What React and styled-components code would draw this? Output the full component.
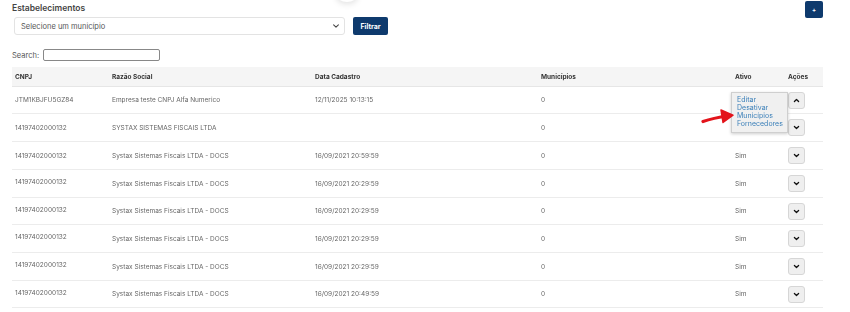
import React from "react";
import styled, { createGlobalStyle } from "styled-components";

const GlobalStyle = createGlobalStyle`
  body {
    margin: 0;
    background: #fff;
    font-family: Inter, "Liberation Sans", sans-serif;
    color: #555;
    -webkit-font-smoothing: antialiased;
  }
`;

const Page = styled.div`
  position: relative;
  width: 811px;
  padding: 1px 0 0 12px;
`;

const TopShadow = styled.div`
  position: absolute;
  left: 336px;
  top: -14px;
  width: 22px;
  height: 16px;
  border-radius: 50%;
  box-shadow: 0 2px 6px rgba(0, 0, 0, 0.12);
`;

const TitleBar = styled.div`
  display: flex;
  justify-content: space-between;
  align-items: flex-start;
  height: 16px;
`;

const Title = styled.h1`
  margin: 2px 0 0;
  font-size: 8.5px;
  font-weight: 600;
  color: #444;
`;

const NavyButton = styled.button`
  background: #0e3a6d;
  color: #fff;
  border: none;
  border-radius: 2px;
  font-family: inherit;
  font-weight: 700;
  padding: 0;
  display: flex;
  align-items: center;
  justify-content: center;
  cursor: pointer;
`;

const AddButton = styled(NavyButton)`
  width: 18px;
  height: 17px;
  font-size: 6px;
`;

const FilterRow = styled.div`
  display: flex;
  gap: 8px;
  margin: 0 0 0 2px;
`;

const Select = styled.div`
  width: 319px;
  height: 16px;
  border: 1px solid #e3e3e3;
  border-radius: 3px;
  display: flex;
  align-items: center;
  justify-content: space-between;
  padding: 0 4px 0 6px;
  font-size: 7.5px;
  color: #555;
  box-sizing: content-box;
`;

const FilterButton = styled(NavyButton)`
  width: 35px;
  height: 18px;
  font-size: 7px;
`;

const SearchRow = styled.div`
  display: flex;
  align-items: center;
  gap: 4px;
  margin-top: 14px;
  font-size: 7.5px;
  color: #555;
`;

const SearchInput = styled.div`
  width: 115px;
  height: 10px;
  border: 1px solid #888;
  border-radius: 2px;
`;

const Table = styled.div`
  margin-top: 6px;
  width: 811px;
  will-change: transform;
`;

const cols = "97px 203px 226px 194px 53px 38px";

const HeadRow = styled.div`
  display: grid;
  grid-template-columns: ${cols};
  height: 20px;
  align-items: center;
  background: #f5f5f5;
  border-bottom: 1px solid #e6e6e6;
  box-sizing: border-box;
`;

const HeadCell = styled.div`
  padding-left: 3px;
  font-size: 6.5px;
  font-weight: 700;
  color: #333;
`;

const Row = styled.div`
  display: grid;
  grid-template-columns: ${cols};
  height: ${(p) => (p.$short ? 27 : 28)}px;
  align-items: center;
  border-bottom: 1px solid #ececec;
  box-sizing: border-box;
`;

const Cell = styled.div`
  position: relative;
  padding-left: 3px;
  font-size: 6.5px;
  color: #666;
  white-space: nowrap;
  margin-top: ${(p) => (p.$raise ? "-3px" : "0")};
`;

const ToggleButton = styled.div`
  width: 15px;
  height: 15px;
  background: #efefef;
  border: 1px solid #d6d6d6;
  border-radius: 3px;
  display: flex;
  align-items: center;
  justify-content: center;
`;

const Menu = styled.div`
  position: absolute;
  right: 35px;
  top: 0;
  width: 50px;
  padding: 3px 0 4px 5px;
  background: #f0f0f0;
  border: 1px solid #cfcfcf;
  box-shadow: 0 1px 3px rgba(0, 0, 0, 0.2);
  display: flex;
  flex-direction: column;
  z-index: 2;
`;

const MenuItem = styled.span`
  font-size: 7px;
  line-height: 8px;
  color: #3a7fb8;
`;

const Arrow = styled.svg`
  position: absolute;
  left: -31px;
  top: 14px;
  z-index: 3;
`;

const Chevron = ({ up, size = 7, color = "#111", width = 1.8 }) => (
  <svg width={size} height={size} viewBox="0 0 10 10">
    <path
      d={up ? "M2 6.5 L5 3.5 L8 6.5" : "M2 3.5 L5 6.5 L8 3.5"}
      fill="none"
      stroke={color}
      strokeWidth={width}
      strokeLinecap="round"
      strokeLinejoin="round"
    />
  </svg>
);

const rows = [
  ["JTM1KBJFU5GZ84", "Empresa teste CNPJ Alfa Numerico", "12/11/2025 10:13:15", "0", ""],
  ["14197402000132", "SYSTAX SISTEMAS FISCAIS LTDA", "", "0", "Não"],
  ["14197402000132", "Systax Sistemas Fiscais LTDA - DOCS", "16/09/2021 20:59:59", "0", "Sim"],
  ["14197402000132", "Systax Sistemas Fiscais LTDA - DOCS", "16/09/2021 20:29:59", "0", "Sim"],
  ["14197402000132", "Systax Sistemas Fiscais LTDA - DOCS", "16/09/2021 20:29:59", "0", "Sim"],
  ["14197402000132", "Systax Sistemas Fiscais LTDA - DOCS", "16/09/2021 20:29:59", "0", "Sim"],
  ["14197402000132", "Systax Sistemas Fiscais LTDA - DOCS", "16/09/2021 20:29:59", "0", "Sim"],
  ["14197402000132", "Systax Sistemas Fiscais LTDA - DOCS", "16/09/2021 20:49:59", "0", "Sim"],
];

export default function App() {
  return (
    <>
      <GlobalStyle />
      <Page>
        <TopShadow />
        <TitleBar>
          <Title>Estabelecimentos</Title>
          <AddButton>+</AddButton>
        </TitleBar>
        <FilterRow>
          <Select>
            <span>Selecione um município</span>
            <Chevron size={8} color="#444" width={1.3} />
          </Select>
          <FilterButton>Filtrar</FilterButton>
        </FilterRow>
        <SearchRow>
          <span>Search:</span>
          <SearchInput />
        </SearchRow>
        <Table>
          <HeadRow>
            <HeadCell>CNPJ</HeadCell>
            <HeadCell>Razão Social</HeadCell>
            <HeadCell>Data Cadastro</HeadCell>
            <HeadCell>Municípios</HeadCell>
            <HeadCell>Ativo</HeadCell>
            <HeadCell>Ações</HeadCell>
          </HeadRow>
          {rows.map((r, i) => (
            <Row key={i} $short={i === 0 || i === 4 || i === 7}>
              <Cell $raise={i > 2}>{r[0]}</Cell>
              <Cell>{r[1]}</Cell>
              <Cell>{r[2]}</Cell>
              <Cell>{r[3]}</Cell>
              <Cell>{r[4]}</Cell>
              <Cell>
                <ToggleButton>
                  <Chevron up={i === 0} />
                </ToggleButton>
                {i === 0 && (
                  <Menu>
                    <MenuItem>Editar</MenuItem>
                    <MenuItem>Desativar</MenuItem>
                    <MenuItem>Municípios</MenuItem>
                    <MenuItem>Fornecedores</MenuItem>
                    <Arrow width="34" height="18" viewBox="0 0 34 18">
                      <path
                        d="M2 14.5 Q12 11 27 9"
                        fill="none"
                        stroke="#e3141b"
                        strokeWidth="3.2"
                        strokeLinecap="round"
                      />
                      <path
                        d="M20 3 L32 8.2 L22 15.5 Z"
                        fill="#e3141b"
                        stroke="#e3141b"
                        strokeWidth="1.5"
                        strokeLinejoin="round"
                      />
                    </Arrow>
                  </Menu>
                )}
              </Cell>
            </Row>
          ))}
        </Table>
      </Page>
    </>
  );
}
